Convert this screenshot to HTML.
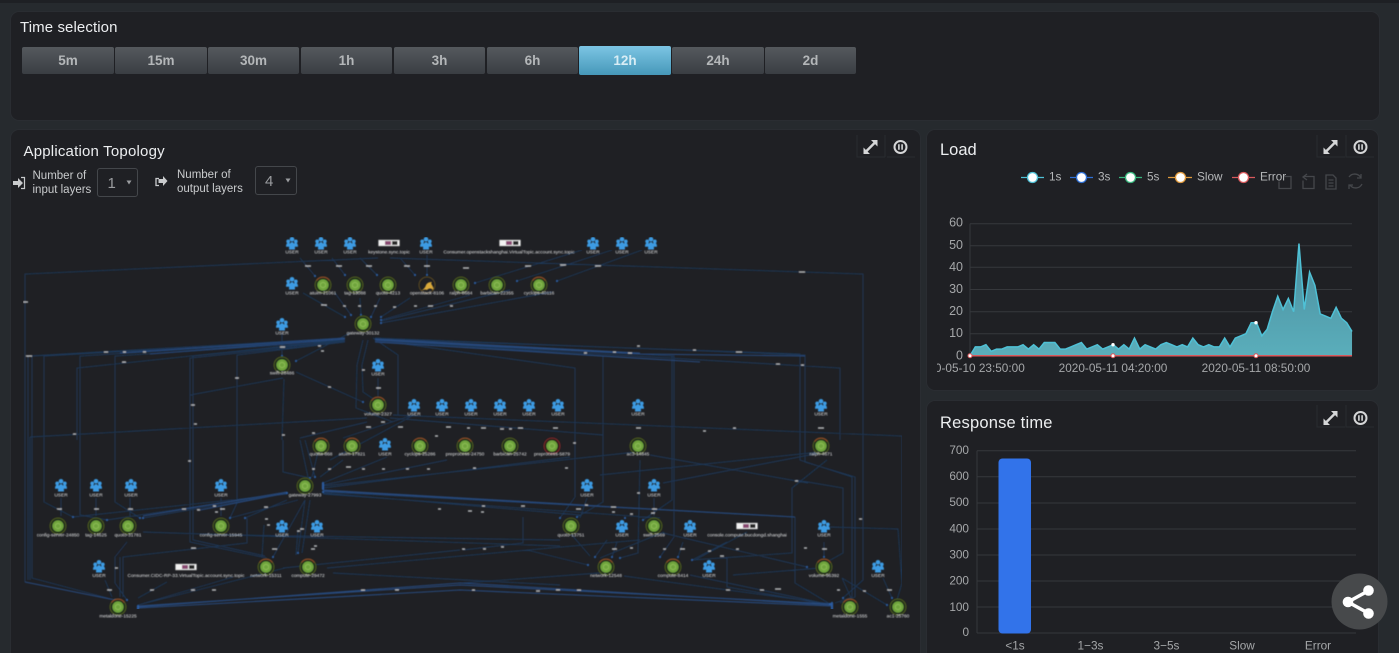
<!DOCTYPE html>
<html lang="en">
<head>
<meta charset="utf-8">
<title>Dashboard</title>
<style>
html,body{margin:0;padding:0;width:1399px;height:653px;overflow:hidden;background:#262a2e}
#w{position:relative;width:1399px;height:653px;overflow:hidden;background:#262a2e;font-family:"Liberation Sans",sans-serif;filter:blur(.35px)}
.p{position:absolute;background:#1f2024;border:1px solid #2a2d32;box-sizing:border-box;border-radius:9px}
.t{position:absolute;color:#eceef0;white-space:nowrap;line-height:1}
.b{position:absolute;top:47px;height:27px;line-height:28px;text-align:center;font-size:13.5px;font-weight:bold;color:#b4b7b9;background:linear-gradient(#55595d,#3a3e43);border-radius:2px}
.a{background:linear-gradient(#7cc5e4,#4698b9);color:#d8edf5;top:46px;height:29px;line-height:30px}
svg{position:absolute;left:0;top:0}
</style>
</head>
<body>
<div id="w">
<div style="position:absolute;left:0;top:0;width:1399px;height:3px;background:#1e2024"></div>
<div class="p" style="left:10px;top:11px;width:1370px;height:110px"></div>
<div class="p" style="left:10px;top:129px;width:911px;height:540px"></div>
<div class="p" style="left:926px;top:129px;width:453px;height:262px"></div>
<div class="p" style="left:926px;top:400px;width:453px;height:270px"></div>

<div class="t" style="left:20px;top:20px;font-size:15px;letter-spacing:.1px">Time selection</div>
<div class="b" style="left:22px;width:92px">5m</div>
<div class="b" style="left:115px;width:92px">15m</div>
<div class="b" style="left:208px;width:91px">30m</div>
<div class="b" style="left:301px;width:91px">1h</div>
<div class="b" style="left:394px;width:91px">3h</div>
<div class="b" style="left:487px;width:91px">6h</div>
<div class="b a" style="left:579px;width:92px">12h</div>
<div class="b" style="left:672px;width:92px">24h</div>
<div class="b" style="left:765px;width:91px">2d</div>

<div class="t" style="left:23.5px;top:144px;font-size:15px;letter-spacing:.2px">Application Topology</div>
<div class="t" style="left:32.5px;top:170.5px;font-size:11.5px;color:#c9cbcd">Number of</div>
<div class="t" style="left:32.5px;top:184.5px;font-size:11.5px;color:#c9cbcd">input layers</div>
<div class="t" style="left:177px;top:169.5px;font-size:11.5px;color:#c9cbcd">Number of</div>
<div class="t" style="left:177px;top:183.5px;font-size:11.5px;color:#c9cbcd">output layers</div>
<div style="position:absolute;left:97px;top:168px;width:41px;height:29px;border:1px solid #44474b;border-radius:3px;box-sizing:border-box"></div>
<div style="position:absolute;left:255px;top:166px;width:42px;height:29px;border:1px solid #44474b;border-radius:3px;box-sizing:border-box"></div>
<div class="t" style="left:107.5px;top:176px;font-size:15px;color:#9a9c9f">1</div>
<div class="t" style="left:265px;top:174px;font-size:15px;color:#9a9c9f">4</div>

<div class="t" style="left:940px;top:142px;font-size:16.5px">Load</div>
<div class="t" style="left:940px;top:415px;font-size:16.5px;letter-spacing:.2px">Response time</div>

<svg width="1399" height="653" viewBox="0 0 1399 653" xmlns="http://www.w3.org/2000/svg" font-family="Liberation Sans, sans-serif">
<defs>
<filter id="bl" x="0" y="0" width="100%" height="100%"><feGaussianBlur stdDeviation=".45"/></filter>
<symbol id="u" overflow="visible" viewBox="-7 -8 14 16" width="14" height="16">
<g fill="#3d9be3"><circle cx="0" cy="-4.7" r="2.3"/><circle cx="-3.8" cy="-2.6" r="1.9"/><circle cx="3.8" cy="-2.6" r="1.9"/><path d="M-6 2.8c0-3 1.2-4 2.4-4s2.4 1 2.4 4zM1.2 2.8c0-3 1.2-4 2.4-4s2.4 1 2.4 4z"/><path d="M-3 5.5c0-5 1.4-7.5 3-7.5s3 2.5 3 7.5z"/></g>
</symbol>
<symbol id="s" overflow="visible" viewBox="-9 -9 18 18" width="18" height="18">
<circle r="8" fill="#1f2a1c" stroke="#4f5d20" stroke-width="1"/><circle r="5.6" fill="#6fa53c"/><path d="M0-2.8 2.5-1.4V1.4L0 2.8-2.5 1.4V-1.4z" fill="none" stroke="#94c25c" stroke-width=".7"/>
</symbol>
<symbol id="h" overflow="visible" viewBox="-9 -9 18 18" width="18" height="18">
<circle r="8" fill="#1f2a1c" stroke="#4f5d20" stroke-width="1"/><path d="M-6.5-4.6A8 8 0 0 1 6.5-4.6" fill="none" stroke="#8f4a28" stroke-width="1.1"/><circle r="5.6" fill="#6fa53c"/><path d="M0-2.8 2.5-1.4V1.4L0 2.8-2.5 1.4V-1.4z" fill="none" stroke="#94c25c" stroke-width=".7"/>
</symbol>
<symbol id="r" overflow="visible" viewBox="-9 -9 18 18" width="18" height="18">
<circle r="8" fill="#2a1c1c" stroke="#7d2729" stroke-width="1.1"/><circle r="5.6" fill="#6fa53c"/><path d="M0-2.8 2.5-1.4V1.4L0 2.8-2.5 1.4V-1.4z" fill="none" stroke="#94c25c" stroke-width=".7"/>
</symbol>
<symbol id="k" overflow="visible" viewBox="-11 -4 22 8" width="22" height="8">
<rect x="-10.5" y="-3" width="21" height="6" fill="#f2f2f2" stroke="#bbb" stroke-width=".4"/><rect x="-4" y="-2" width="6" height="4" fill="#8a4a72"/><rect x="3" y="-2" width="5.5" height="4" fill="#2b2b2b"/>
</symbol>
<clipPath id="xc"><rect x="937" y="355" width="440" height="30"/></clipPath>
<linearGradient id="ar" x1="0" y1="0" x2="0" y2="1"><stop offset="0" stop-color="#5aaebb"/><stop offset="1" stop-color="#4b8c9d"/></linearGradient>
</defs>

<!-- top-right icons -->
<g fill="none" stroke="#292c30">
<path d="M857 135v22h28M885 135v22M887 157h28"/>
<path d="M1317 135v22h28M1346 135v22h28"/>
<path d="M1317 405v22h28M1346 405v22h28"/>
</g>
<g id="ic" stroke="#d5d6d7" fill="#d5d6d7">
<g transform="translate(870.5,147)"><path d="M-4 4 4-4" stroke-width="2.4"/><path d="M.5-7H7V-.5zM-.5 7H-7V.5z" stroke="none"/></g>
<g transform="translate(900.5,147)" fill="none"><circle r="6" stroke-width="2"/><path d="M-1.6-2.8V2.8M1.6-2.8V2.8" stroke-width="1.6"/></g>
<g transform="translate(1330.5,147)"><path d="M-4 4 4-4" stroke-width="2.4"/><path d="M.5-7H7V-.5zM-.5 7H-7V.5z" stroke="none"/></g>
<g transform="translate(1360.5,147)" fill="none"><circle r="6" stroke-width="2"/><path d="M-1.6-2.8V2.8M1.6-2.8V2.8" stroke-width="1.6"/></g>
<g transform="translate(1330.5,418)"><path d="M-4 4 4-4" stroke-width="2.4"/><path d="M.5-7H7V-.5zM-.5 7H-7V.5z" stroke="none"/></g>
<g transform="translate(1360.5,418)" fill="none"><circle r="6" stroke-width="2"/><path d="M-1.6-2.8V2.8M1.6-2.8V2.8" stroke-width="1.6"/></g>
</g>

<!-- layer controls -->
<g fill="#c9cbcd">
<path d="M13 181h5v-3l5 5-5 5v-3h-5z"/><path d="M21 177.500h3.500v11H21" fill="none" stroke="#c9cbcd" stroke-width="1.200"/>
<path d="M159 178.500h-3v7h3" fill="none" stroke="#c9cbcd" stroke-width="1.300"/><path d="M158.500 179h4.500v-3l4.500 5-4.500 5v-3h-4.500z"/>
<path d="M126.500 180.500h5l-2.500 4z" fill="#9a9c9f"/><path d="M285.500 178.500h5l-2.500 4z" fill="#9a9c9f"/>
</g>

<!-- topology edges -->
<g filter="url(#bl)">
<path fill="none" stroke="#1e3759" stroke-width=".9" d="
M378 258 25 274V582M390 258 863 274V580L843 598
M300 258 315 276M332 258 345 275M360 258 377 275M400 258 415 275M427 255V275
M303 293 345 317M335 293 351 315M360 298 361 315M380 298 371 317M410 298 381 317M470 295 381 320M510 290 381 321M552 292 381 323
M582 250 475 283M612 250 517 281M642 250 557 281
M282 333V355M350 333 296 361M296 372 363 402M284 379 282 440
M345 338 28 356V580M345 340 32 356V578L115 600M345 339 44 356V502L73 517M345 340 80 356V515L107 520M345 341 115 356V502L140 518M345 341 193 356V540L265 556M345 342 190 358V542L267 558M345 342 237 355V503L230 518
M343 340 77 368V440M283 378 190 395V440
M375 338 805 355V462L855 477V597L840 603M375 339 800 354V460L852 477V597L835 603M375 341 840 368V440M375 340 603 356V502L577 517M375 340 672 356V500L643 520M375 341 674 356V537L660 557M376 340 575 368V497L560 518
M363 340 357 365 356 408 393 422M368 340 362 365 363 392 375 400M373 338 398 355V415
M30 437 367 418M393 415 902 436V583L897 600M390 418 603 435M367 422 300 438M413 415 343 438M30 437V580
M378 378V398M414 415 330 460
M827 460 792 488V553L692 560M796 480 843 488V553L827 562M795 517V583L830 604M830 527 898 529 902 583 897 600M663 483 820 453M640 460 638 553 620 558M650 455 808 483M607 540 595 557M523 517V543L463 550M727 557V587L830 605M617 542 612 557M683 542 678 557M824 542V557M727 542 692 560M842 578 887 605M883 578 892 598M733 575 820 568M613 572 463 583M663 533 807 567M527 550 588 565
M283 440V472L310 478M300 440 308 477M305 440 315 477M318 452 312 477M343 460 320 477M387 457 323 483M447 460 323 485M570 457 323 488M636 452 323 486M820 452 600 475
M287 493 143 518M287 493 107 520M287 494 73 517M287 500 245 518M298 500 230 518M305 500 273 557M305 500 298 553M264 525 262 557M298 530 296 555M310 500 302 553
M61 498V516M96 498V516M130 498V516M221 498V516M127 542 115 557V583L127 600M247 518V543L123 557V597M120 557V597M143 532 560 546M233 535 560 540M333 573 560 585M327 568 640 540M283 568 460 550M138 605 285 568M138 605 233 577M167 582 138 598M105 580 112 597
M323 492 795 517M323 493 580 515M323 494 660 518M587 498 580 518M654 498V516M571 534 590 556M664 532 600 558M747 532 695 560
M842 578 852 600M624 576 832 604M690 575 832 605"/>
<path fill="none" stroke="#27487c" stroke-width="1.100" d="
M345 338 120 353M345 339 150 354M375 339 640 353M375 340 640 354 805 356M375 342 700 362
M323 490 600 506M323 491 795 517M287 493 200 510M287 492 143 516M25 582 115 600
M138 608 460 590 832 606M138 606 460 585 832 604M138 607 460 583 832 605"/>
<path fill="none" stroke="#2a5ca0" stroke-width="2.200" stroke-linecap="round" d="
M315 276h0M345 275h0M377 275h0M415 275h0M427 275h0M345 317h0M351 315h0M361 315h0M371 317h0M381 317h0M381 320h0M381 323h0M475 283h0M517 281h0M557 281h0
M296 361h0M363 402h0M375 400h0M282 356h0M323 483v6M323 492h0M287 493h0M73 517h0M107 520h0M143 518h0M140 518h0M245 518h0M230 518h0M310 478h0M315 477h0
M832 603v6M138 606v3M115 600h0M127 600h0M830 604h0M887 605h0M892 598h0M843 598h0M612 557h0M620 558h0M595 557h0M678 557h0M660 557h0M692 560h0M824 557h0M807 567h0M588 565h0M273 557h0M298 553h0M560 518h0M577 517h0M643 520h0M625 518h0"/>
<path fill="none" stroke="#b4b6b8" stroke-width="1.500" d="
M23 302h5M26 356h6M104 352h4M123 352h3M143 352h3M122 362h4M280 347h5M318 346h3M321 351h3M328 387h3M235 378h4M191 405h4M194 424h3M73 434h3M282 435h3M362 370h3M376 388h5M312 433h3M366 427h5M381 422h4M398 427h5M446 427h5M435 436h3
M305 266h6M336 266h6M366 266h6M404 266h6M424 266h6M321 305h6M343 306h3M358 306h3M374 306h3M393 307h3M414 306h3M428 306h5M450 306h3
M463 268h6M525 266h6M560 265h6M595 266h6M799 272h6M637 346h3M693 350h3M736 352h6M584 353h3M613 352h3M628 353h4M776 364h4M801 365h3
M467 428h3M481 428h5M500 429h4M509 429h3M518 428h5M553 428h5M636 428h5M703 431h3M733 428h3M818 428h6
M57 509h5M94 509h5M128 509h5M182 509h4M197 510h3M213 506h3M215 512h3M220 509h5M188 461h3M312 469h3M328 469h3M346 467h5M362 469h3M382 469h3M406 469h3M427 469h3M264 507h4M265 519h3M267 525h3M297 531h3M300 529h4M191 548h5M272 549h5M314 546h3M311 549h4M115 568h3M107 590h5M150 590h4M191 590h4M212 590h4M361 590h4M395 590h4M438 509h3
M473 468h3M565 468h3M573 443h3M482 506h3M468 511h4M481 512h3M521 506h4M576 509h5M585 505h3M611 507h5M612 512h3M630 514h3M652 509h5M651 513h4M637 493h3M612 549h5M630 548h3M663 549h3M680 549h5M708 551h3M736 549h3M720 556h4M822 549h5M804 548h3M795 481h3M859 519h3M462 549h3M483 549h3M501 547h3M472 590h3M536 591h4M556 590h4M577 590h4M726 590h4M760 590h4M775 589h6M837 590h3M863 591h3M887 590h5"/>
</g>

<g filter="url(#bl)">
<!-- users -->
<g>
<use href="#u" x="285" y="236"/><use href="#u" x="314" y="236"/><use href="#u" x="343" y="236"/><use href="#u" x="419" y="236"/><use href="#u" x="586" y="236"/><use href="#u" x="615" y="236"/><use href="#u" x="644" y="236"/>
<use href="#u" x="285" y="276"/><use href="#u" x="275" y="317"/><use href="#u" x="371" y="358"/>
<use href="#u" x="407" y="398"/><use href="#u" x="435" y="398"/><use href="#u" x="464" y="398"/><use href="#u" x="493" y="398"/><use href="#u" x="522" y="398"/><use href="#u" x="551" y="398"/><use href="#u" x="631" y="398"/><use href="#u" x="814" y="398"/>
<use href="#u" x="378" y="437"/>
<use href="#u" x="54" y="478"/><use href="#u" x="89" y="478"/><use href="#u" x="124" y="478"/><use href="#u" x="214" y="478"/><use href="#u" x="580" y="478"/><use href="#u" x="647" y="478"/>
<use href="#u" x="275" y="519"/><use href="#u" x="310" y="519"/><use href="#u" x="615" y="519"/><use href="#u" x="683" y="519"/><use href="#u" x="817" y="519"/>
<use href="#u" x="92" y="559"/><use href="#u" x="702" y="559"/><use href="#u" x="871" y="559"/>
</g>

<!-- services -->
<g>
<use href="#h" x="314" y="276"/><use href="#s" x="346" y="276"/><use href="#s" x="379" y="276"/><use href="#s" x="452" y="276"/><use href="#s" x="488" y="276"/><use href="#h" x="530" y="276"/>
<use href="#s" x="354" y="315"/><use href="#s" x="273" y="356"/><use href="#h" x="369" y="396"/>
<use href="#h" x="312" y="437"/><use href="#h" x="343" y="437"/><use href="#h" x="411" y="437"/><use href="#h" x="456" y="437"/><use href="#s" x="501" y="437"/><use href="#r" x="543" y="437"/><use href="#s" x="629" y="437"/><use href="#h" x="812" y="437"/>
<use href="#s" x="296" y="477"/>
<use href="#s" x="49" y="517"/><use href="#s" x="87" y="517"/><use href="#s" x="119" y="517"/><use href="#s" x="212" y="517"/><use href="#s" x="562" y="517"/><use href="#s" x="645" y="517"/>
<use href="#h" x="257" y="558"/><use href="#h" x="299" y="558"/><use href="#h" x="597" y="558"/><use href="#h" x="664" y="558"/><use href="#h" x="815" y="558"/>
<use href="#h" x="109" y="598"/><use href="#h" x="841" y="598"/><use href="#s" x="889" y="598"/>
<path d="M420 291c3-1 5-3 6-6 1-2 3-3 6-3-1 1-1 2 0 3 1 2 2 3 1 5-2-2-4-2-6 0-2-1-4 0-7 1z" fill="#d9a93a"/>
<circle cx="427" cy="285" r="8" fill="none" stroke="#5c4a22" stroke-width="1"/>
</g>

<!-- topics -->
<use href="#k" x="378" y="239"/><use href="#k" x="499" y="239"/><use href="#k" x="736" y="522"/><use href="#k" x="175" y="563"/>

<!-- node labels -->
<g fill="#e2e3e4" font-size="4.800" text-anchor="middle">
<text x="292" y="253.500">USER</text><text x="321" y="253.500">USER</text><text x="350" y="253.500">USER</text><text x="389" y="253.500">keystone.sync.topic</text><text x="426" y="253.500">USER</text><text x="509" y="253.500">Consumer.openstackshanghai.VirtualTopic.account.sync.topic</text><text x="593" y="253.500">USER</text><text x="622" y="253.500">USER</text><text x="651" y="253.500">USER</text>
<text x="292" y="294.500">USER</text><text x="323" y="294.500">atuim-21061</text><text x="355" y="294.500">tag-13088</text><text x="388" y="294.500">quoto-4213</text><text x="427" y="294.500">openstack-8106</text><text x="461" y="294.500">ralph-8684</text><text x="497" y="294.500">barbican-22355</text><text x="539" y="294.500">cyclops-40116</text>
<text x="282" y="334.500">USER</text><text x="363" y="334.500">gateway-30132</text><text x="282" y="374.500">swift-28486</text><text x="378" y="375.500">USER</text>
<text x="378" y="415.500">volume-2327</text><text x="414" y="415.500">USER</text><text x="471" y="415.500">USER</text><text x="442" y="415.500">USER</text><text x="500" y="415.500">USER</text><text x="529" y="415.500">USER</text><text x="558" y="415.500">USER</text><text x="638" y="415.500">USER</text><text x="821" y="415.500">USER</text>
<text x="321" y="455.500">quotta-868</text><text x="352" y="455.500">atuim-17821</text><text x="385" y="455.500">USER</text><text x="420" y="455.500">cyclops-25286</text><text x="465" y="455.500">preprocess-24750</text><text x="510" y="455.500">barbican-25742</text><text x="552" y="455.500">preprocess-5879</text><text x="638" y="455.500">ac3-14845</text><text x="821" y="455.500">ralph-4671</text>
<text x="305" y="496.500">gateway-27993</text><text x="61" y="496.500">USER</text><text x="96" y="496.500">USER</text><text x="131" y="496.500">USER</text><text x="221" y="496.500">USER</text><text x="587" y="496.500">USER</text><text x="654" y="496.500">USER</text>
<text x="58" y="536.500">config-server-24850</text><text x="96" y="536.500">tag-14625</text><text x="128" y="536.500">quoto-31781</text><text x="221" y="536.500">config-server-15945</text><text x="282" y="536.500">USER</text><text x="317" y="536.500">USER</text><text x="571" y="536.500">quoto-13751</text><text x="622" y="536.500">USER</text><text x="654" y="536.500">swift-2569</text><text x="690" y="536.500">USER</text><text x="747" y="536.500">console.compute.bucdongd.shanghai</text><text x="824" y="536.500">USER</text>
<text x="99" y="577">USER</text><text x="186" y="577">Consumer.CIDC-RP-33.VirtualTopic.account.sync.topic</text><text x="266" y="577">network-15311</text><text x="308" y="577">compute-29472</text><text x="606" y="577">network-12548</text><text x="673" y="577">compute-8414</text><text x="709" y="577">USER</text><text x="824" y="577">volume-96392</text><text x="878" y="577">USER</text>
<text x="118" y="617.500">metaldone-15225</text><text x="850" y="617.500">metaldone-1555</text><text x="898" y="617.500">ac1-25760</text>
</g>
</g>

<!-- Load chart -->
<g stroke="#36383c" fill="none">
<path d="M970 223.700H1352M970 245.700H1352M970 267.300H1352M970 289.500H1352M970 311.700H1352M970 333.700H1352M970 223.700V355.700"/>
</g>
<g transform="translate(970,355.700) scale(5.306,-2.200)">
<polygon fill="url(#ar)" stroke="none" points="0,0 1,4 2,4 3,5 4,2 5,3 6,3 7,4 8,4 9,4 10,5 11,3 12,5 13,3 14,6 15,6 16,6 17,3 18,3 19,4 20,5 21,6 22,3 23,4 24,5 25,3 26,4 27,5 28,3 29,5 30,3 31,8 32,3 33,5 34,4 35,3 36,5 37,6 38,5 39,4 40,5 41,4 42,8 43,5 44,4 45,5 46,4 47,4 48,8 49,4 50,8 51,9 52,10 53,15 54,15 55,9 56,12 57,20 58,27 59,21 60,26 61,20 62,51 63,21 64,38 65,32 66,19 67,18 68,17 69,22 70,17 71,15 72,11 72,0"/>
<polyline fill="none" stroke="#4fc1d6" stroke-width="1.500" vector-effect="non-scaling-stroke" points="0,0 1,4 2,4 3,5 4,2 5,3 6,3 7,4 8,4 9,4 10,5 11,3 12,5 13,3 14,6 15,6 16,6 17,3 18,3 19,4 20,5 21,6 22,3 23,4 24,5 25,3 26,4 27,5 28,3 29,5 30,3 31,8 32,3 33,5 34,4 35,3 36,5 37,6 38,5 39,4 40,5 41,4 42,8 43,5 44,4 45,5 46,4 47,4 48,8 49,4 50,8 51,9 52,10 53,15 54,15 55,9 56,12 57,20 58,27 59,21 60,26 61,20 62,51 63,21 64,38 65,32 66,19 67,18 68,17 69,22 70,17 71,15 72,11"/>
</g>
<path d="M970 355.700H1352" stroke="#d9595c" stroke-width="1.500"/>
<g fill="#fff" stroke="#d9595c"><circle cx="970" cy="355.700" r="2"/><circle cx="1113" cy="355.700" r="2"/><circle cx="1256" cy="355.700" r="2"/></g>
<g fill="#fff"><circle cx="1113" cy="344.700" r="1.700"/><circle cx="1256" cy="322.700" r="1.700"/></g>
<g fill="#a5a7a9" font-size="12.500" text-anchor="end">
<text x="963" y="226.500">60</text><text x="963" y="249">50</text><text x="963" y="271">40</text><text x="963" y="293">30</text><text x="963" y="315">20</text><text x="963" y="337">10</text><text x="963" y="359.500">0</text>
</g>
<g clip-path="url(#xc)" fill="#a5a7a9" font-size="11.800" text-anchor="middle">
<text x="970" y="372">2020-05-10 23:50:00</text><text x="1113" y="372">2020-05-11 04:20:00</text><text x="1256" y="372">2020-05-11 08:50:00</text>
</g>
<!-- legend -->
<g fill="#fff" stroke-width="1.300">
<path d="M1021 177.500h23" stroke="#4fc1d6"/><circle cx="1032.500" cy="177.500" r="5" stroke="#4fc1d6"/>
<path d="M1070 177.500h23" stroke="#2e6fd4"/><circle cx="1081.500" cy="177.500" r="5" stroke="#2e6fd4"/>
<path d="M1119 177.500h23" stroke="#39b87f"/><circle cx="1130.500" cy="177.500" r="5" stroke="#39b87f"/>
<path d="M1168 177.500h24" stroke="#e09a3c"/><circle cx="1180.500" cy="177.500" r="5" stroke="#e09a3c"/>
<path d="M1232 177.500h23" stroke="#d9595c"/><circle cx="1243.500" cy="177.500" r="5" stroke="#d9595c"/>
</g>
<g fill="#b5b7b9" font-size="11.800">
<text x="1049" y="180.500">1s</text><text x="1098" y="180.500">3s</text><text x="1147" y="180.500">5s</text><text x="1197" y="180.500">Slow</text><text x="1260" y="180.500">Error</text>
</g>
<!-- toolbox -->
<g fill="none" stroke="#45474b" stroke-width="1.300">
<path d="M1284 176.500h7v12h-12v-7"/>
<path d="M1304 176.500h10v12h-11v-8M1307 174l-4 3 4 3"/>
<path d="M1326 175h7l3 3v11h-10zM1328.500 180h5M1328.500 183h5M1328.500 186h5"/>
<path d="M1349 177a7 7 0 0 1 12 1M1362 184a7 7 0 0 1-12 1M1361 174v4h-4M1349 189v-4h4"/>
</g>

<!-- Response chart -->
<g stroke="#36383c" fill="none">
<path d="M977 450.700H1356M977 476.700H1356M977 503H1356M977 529H1356M977 555H1356M977 581H1356M977 607H1356M977 633H1356M977 450.700V633"/>
</g>
<rect x="998.500" y="458.500" width="32.500" height="175" rx="4" fill="#3273ea"/>
<g fill="#a5a7a9" font-size="11.800" text-anchor="end">
<text x="969" y="454">700</text><text x="969" y="480">600</text><text x="969" y="506">500</text><text x="969" y="532.500">400</text><text x="969" y="558.500">300</text><text x="969" y="584.500">200</text><text x="969" y="611">100</text><text x="969" y="636">0</text>
</g>
<g fill="#a5a7a9" font-size="11.800" text-anchor="middle">
<text x="1015" y="649.500">&lt;1s</text><text x="1090.500" y="649.500">1−3s</text><text x="1166.500" y="649.500">3−5s</text><text x="1242" y="649.500">Slow</text><text x="1318" y="649.500">Error</text>
</g>

<!-- share -->
<circle cx="1359.500" cy="601.500" r="28" fill="#47494b"/>
<path d="M1368 591 1348 602 1368 613" fill="none" stroke="#fff" stroke-width="3.500"/>
<g fill="#fff"><circle cx="1368.500" cy="590.500" r="5.300"/><circle cx="1348" cy="602" r="5.300"/><circle cx="1368.500" cy="613.500" r="5.300"/></g>
</svg>
</div>
</body>
</html>
